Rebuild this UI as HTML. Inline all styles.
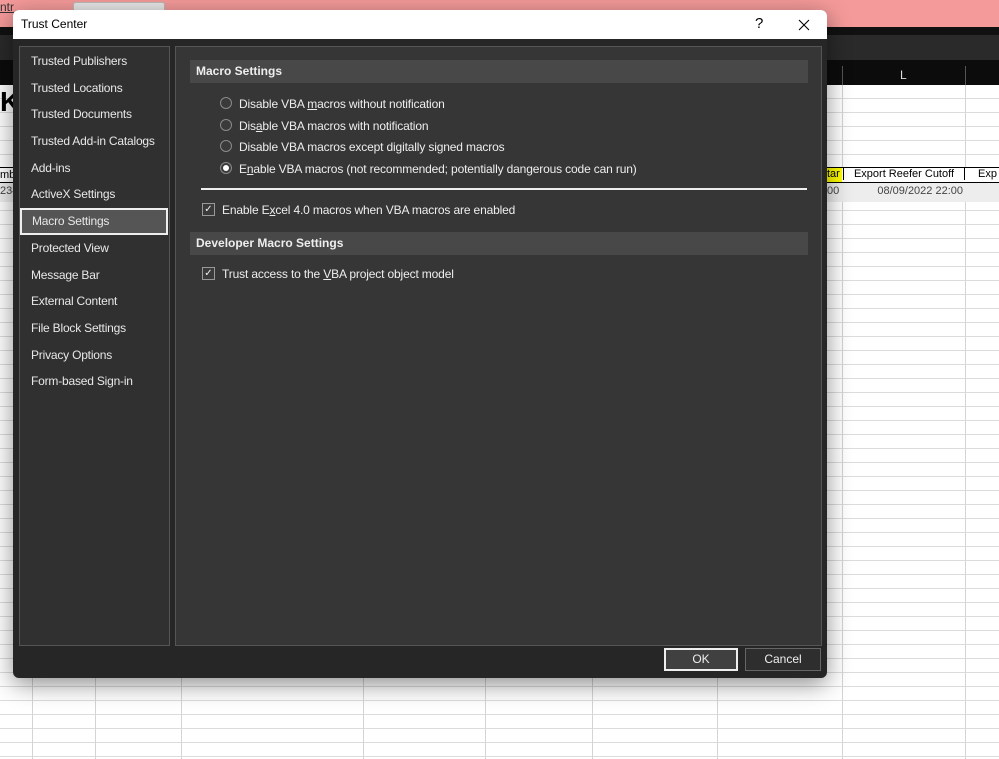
<!DOCTYPE html>
<html><head><meta charset="utf-8"><style>
*{margin:0;padding:0;box-sizing:border-box}
body{width:999px;height:759px;overflow:hidden;position:relative;background:#fff;font-family:"Liberation Sans",sans-serif;font-size:12px}
.a{position:absolute}
.grid{position:absolute;left:0;top:85px;width:999px;height:674px;
background-image:linear-gradient(#dcdcdc 1px,transparent 1px);background-size:100% 14px;background-position:0 13px}
.vl{position:absolute;top:85px;bottom:0;width:1px;background:#d4d4d4}
.dlg{position:absolute;left:13px;top:10px;width:814px;height:668px;background:#262626;border-radius:6px;box-shadow:0 6px 24px rgba(0,0,0,.45);overflow:hidden}
.tb{position:absolute;left:0;top:0;width:814px;height:29px;background:#fff;color:#000}
.nav div{height:26.7px;line-height:26px;padding-left:11px;color:#e8e8e8;font-size:12px;letter-spacing:-0.2px}
.r{position:absolute;color:#eee;font-size:12px;letter-spacing:-0.15px}
.rad{position:absolute;width:12px;height:12px;border:1px solid #8a8a8a;border-radius:50%;background:#3a3a3a}
.cb{position:absolute;width:13px;height:13px;border:1px solid #999;background:#3a3a3a;color:#eee;font-size:10px;line-height:11px;text-align:center}
.sh{position:absolute;left:14px;width:618px;height:23px;background:#484848;color:#eee;font-weight:bold;line-height:23px;padding-left:6px;font-size:12px}
u{text-decoration:underline}
</style></head><body>
<div class="a" style="left:0;top:0;width:999px;height:27px;background:#f59a9a"></div>
<div class="a" style="left:73px;top:2px;width:92px;height:12px;background:#e8e8e8;border:1px solid #bbb;border-radius:3px"></div>
<div class="a" style="left:0;top:0;color:#333;font-size:12px;text-decoration:underline">ntr</div>
<div class="a" style="left:0;top:27px;width:999px;height:8px;background:#111"></div>
<div class="a" style="left:0;top:35px;width:999px;height:25px;background:#2a2a2a"></div>
<div class="a" style="left:0;top:60px;width:999px;height:25px;background:#0c0c0c"></div>
<div class="a" style="left:900px;top:68px;color:#ddd;font-size:12px">L</div>
<div class="a" style="left:842px;top:66px;width:1px;height:19px;background:#555"></div>
<div class="a" style="left:965px;top:66px;width:1px;height:19px;background:#555"></div>
<div class="grid"></div>
<div class="vl" style="left:32px"></div><div class="vl" style="left:95px"></div><div class="vl" style="left:181px"></div><div class="vl" style="left:363px"></div><div class="vl" style="left:485px"></div><div class="vl" style="left:592px"></div><div class="vl" style="left:717px"></div><div class="vl" style="left:842px"></div><div class="vl" style="left:965px"></div>
<div class="a" style="left:0;top:86px;font-size:28px;font-weight:bold;color:#000">K</div>
<div class="a" style="left:0;top:167px;width:999px;height:16px;background:#fff;border-top:1px solid #000;border-bottom:1px solid #000"></div>
<div class="a" style="left:827px;top:168px;width:15px;height:14px;background:#ff0"></div>
<div class="a" style="left:827px;top:168px;font-size:11px">tar</div>
<div class="a" style="left:843px;top:168px;width:122px;text-align:center;font-size:11px;border-left:1px solid #000;border-right:1px solid #000">Export Reefer Cutoff</div>
<div class="a" style="left:978px;top:168px;font-size:11px">Exp</div>
<div class="a" style="left:0;top:183px;width:999px;height:19px;background:#ededed"></div>
<div class="a" style="left:827px;top:185px;font-size:11px;color:#444">00</div>
<div class="a" style="left:843px;top:185px;width:120px;text-align:right;font-size:11px;color:#444">08/09/2022 22:00</div>
<div class="a" style="left:0;top:169px;font-size:11px">mb</div>
<div class="a" style="left:0;top:185px;font-size:11px;color:#444">234</div>

<div class="dlg">
 <div class="tb"><span class="a" style="left:8px;top:7px;font-size:12px">Trust Center</span>
  <span class="a" style="left:742px;top:5px;font-size:15px">?</span>
  <svg class="a" style="left:785px;top:9px" width="12" height="12" viewBox="0 0 12 12"><path d="M1 1L11 11M11 1L1 11" stroke="#000" stroke-width="1.1"/></svg></div>
 <div class="a nav" style="left:6px;top:36px;width:151px;height:600px;background:#303030;border:1px solid #555;padding-top:1px">
  <div>Trusted Publishers</div><div>Trusted Locations</div><div>Trusted Documents</div><div>Trusted Add-in Catalogs</div><div>Add-ins</div><div>ActiveX Settings</div>
  <div style="background:#555;border:2px solid #eee;margin:0 1px 0 0;padding-left:10px;line-height:22px">Macro Settings</div>
  <div>Protected View</div><div>Message Bar</div><div>External Content</div><div>File Block Settings</div><div>Privacy Options</div><div>Form-based Sign-in</div>
 </div>
 <div class="a" style="left:162px;top:36px;width:647px;height:600px;background:#363636;border:1px solid #555">
  <div class="sh" style="top:13px">Macro Settings</div>
  <div class="rad" style="left:44px;top:50px"></div><div class="r" style="left:63px;top:50px">Disable VBA <u>m</u>acros without notification</div>
  <div class="rad" style="left:44px;top:72px"></div><div class="r" style="left:63px;top:72px">Dis<u>a</u>ble VBA macros with notification</div>
  <div class="rad" style="left:44px;top:93px"></div><div class="r" style="left:63px;top:93px">Disable VBA macros except digitally signed macros</div>
  <div class="rad" style="left:44px;top:115px"><div style="position:absolute;left:2px;top:2px;width:6px;height:6px;border-radius:50%;background:#fff"></div></div><div class="r" style="left:63px;top:115px">E<u>n</u>able VBA macros (not recommended; potentially dangerous code can run)</div>
  <div class="a" style="left:25px;top:141px;width:606px;height:2px;background:#eee"></div>
  <div class="cb" style="left:26px;top:156px">✓</div><div class="r" style="left:46px;top:156px">Enable E<u>x</u>cel 4.0 macros when VBA macros are enabled</div>
  <div class="sh" style="top:185px">Developer Macro Settings</div>
  <div class="cb" style="left:26px;top:220px">✓</div><div class="r" style="left:46px;top:220px">Trust access to the <u>V</u>BA project object model</div>
 </div>
 <div class="a" style="left:651px;top:638px;width:74px;height:23px;background:#404040;border:2px solid #eee;color:#eee;text-align:center;line-height:19px">OK</div>
 <div class="a" style="left:732px;top:638px;width:76px;height:23px;background:#2e2e2e;border:1px solid #666;color:#eee;text-align:center;line-height:21px">Cancel</div>
</div>
</body></html>
